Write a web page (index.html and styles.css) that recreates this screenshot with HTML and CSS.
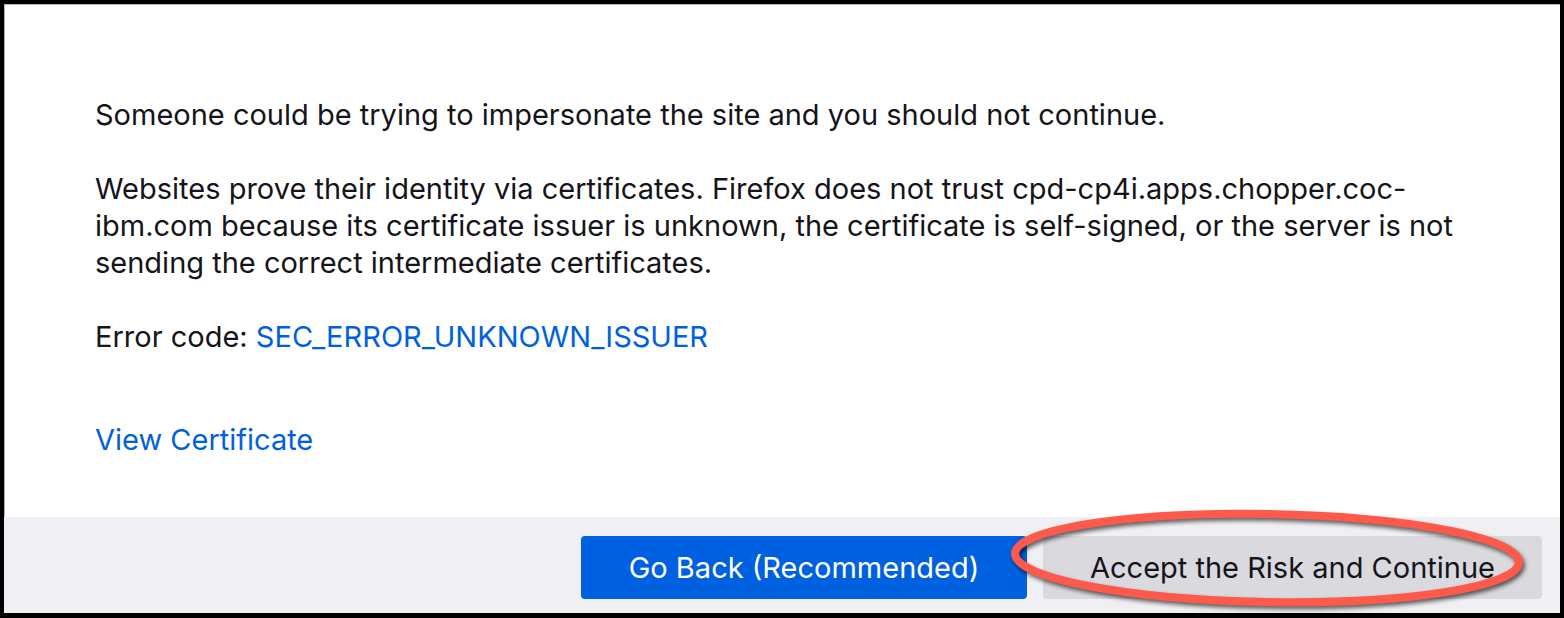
FILE: index.html
```html
<!DOCTYPE html>
<html lang="en">
<head>
<meta charset="utf-8">
<title>Warning: Potential Security Risk Ahead</title>
<link rel="stylesheet" href="styles.css">
</head>
<body>
<div class="frame">
  <main class="content">
    <p>Someone could be trying to impersonate the site and you should not continue.</p>
    <p>Websites prove their identity via certificates. Firefox does not trust cpd-cp4i.apps.chopper.coc-ibm.com because its certificate issuer is unknown, the certificate is self-signed, or the server is not sending the correct intermediate certificates.</p>
    <p>Error code: <a class="link" href="#">SEC_ERROR_UNKNOWN_ISSUER</a></p>
    <p class="cert"><a class="link" href="#">View Certificate</a></p>
  </main>
  <footer class="actions">
    <button class="btn primary">Go Back (Recommended)</button>
    <button class="btn secondary">Accept the Risk and Continue</button>
  </footer>
  <svg class="annotation" width="560" height="130" viewBox="0 0 560 130" aria-hidden="true">
    <ellipse cx="280" cy="60" rx="252" ry="44" transform="rotate(1 280 60)" fill="none" stroke="#fd5a4b" stroke-width="8"/>
  </svg>
</div>
</body>
</html>
```
FILE: styles.css
```css
* { box-sizing: border-box; }
html, body { margin: 0; padding: 0; }
body {
  width: 1564px;
  height: 618px;
  overflow: hidden;
  background: #000;
  font-family: Inter, "Noto Sans", sans-serif;
  color: #15141a;
}
.frame {
  position: relative;
  width: 1564px;
  height: 618px;
  border-style: solid;
  border-color: #000;
  border-width: 4px 4px 5px 4px;
  background: #fff;
  display: flex;
  flex-direction: column;
  box-shadow: inset 1px 1px 0 #b5b5b5;
}
.content {
  flex: 1;
  padding: 92px 0 0 91px;
  font-size: 29px;
  line-height: 37px;
}
.content p {
  margin: 0 0 37px 0;
  max-width: 1375px;
}
.content p.cert {
  margin-top: 66px;
}
.link {
  color: #0061e0;
  text-decoration: none;
}
.actions {
  height: 96px;
  background: #f0f0f4;
  display: flex;
  justify-content: flex-end;
  align-items: flex-start;
  gap: 16px;
  padding: 19px 18px 0 0;
}
.btn {
  height: 63px;
  border: none;
  border-radius: 4px;
  padding: 0 40px;
  font-family: Inter, "Noto Sans", sans-serif;
  font-size: 29px;
  white-space: nowrap;
}
.primary {
  background: #0061e0;
  color: #fff;
  width: 446px;
}
.secondary {
  background: #d9d9de;
  color: #15141a;
  width: 499px;
}
.annotation {
  position: absolute;
  left: 983px;
  top: 494px;
  filter: drop-shadow(2px 3px 2px rgba(0,0,0,0.6));
  pointer-events: none;
}
```
